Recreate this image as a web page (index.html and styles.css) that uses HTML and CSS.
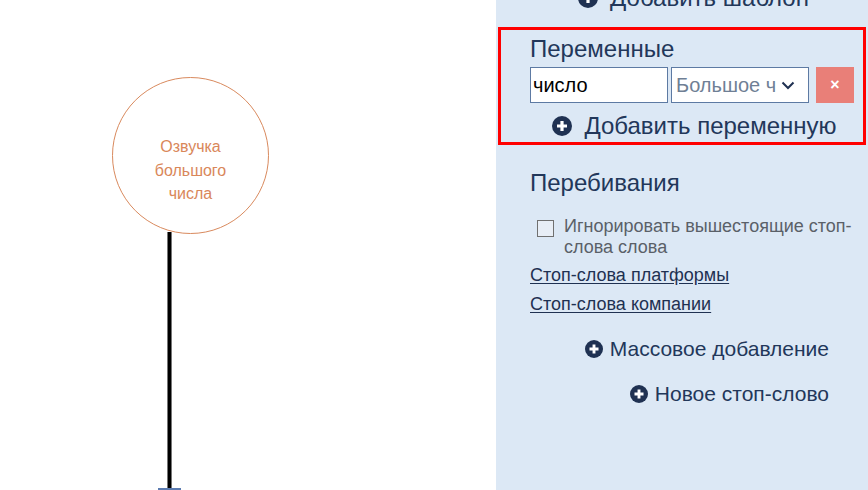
FILE: index.html
```html
<!DOCTYPE html>
<html lang="ru">
<head>
<meta charset="utf-8">
<link rel="stylesheet" href="styles.css">
</head>
<body>
<div class="app">
  <div class="canvas">
    <div class="node"><span>Озвучка большого числа</span></div>
    <div class="edge"></div>
    <div class="edge-end"></div>
  </div>
  <aside class="panel">
    <div class="add-link add-template">
      <svg class="plus" viewBox="0 0 20 20"><circle cx="10" cy="10" r="10"/><path d="M10 5v10M5 10h10"/></svg>
      <span>Добавить шаблон</span>
    </div>
    <section class="vars">
      <h2 class="section-title">Переменные</h2>
      <div class="var-row">
        <div class="field">число</div>
        <div class="field select"><span class="select-text">Большое ч</span>
          <svg class="chev" viewBox="0 0 14 9"><path d="M1.5 1.5l5.5 5.5 5.5-5.5"/></svg>
        </div>
        <button class="del">×</button>
      </div>
      <div class="add-link add-var">
        <svg class="plus" viewBox="0 0 20 20"><circle cx="10" cy="10" r="10"/><path d="M10 5v10M5 10h10"/></svg>
        <span>Добавить переменную</span>
      </div>
    </section>
    <section class="interrupts">
      <h2 class="section-title">Перебивания</h2>
      <label class="check">
        <span class="box"></span>
        <span class="check-text">Игнорировать вышестоящие стоп-слова слова</span>
      </label>
      <a class="link" href="#">Стоп-слова платформы</a>
      <a class="link" href="#">Стоп-слова компании</a>
      <div class="actions">
        <div class="action">
          <svg class="plus small" viewBox="0 0 20 20"><circle cx="10" cy="10" r="10"/><path d="M10 5v10M5 10h10"/></svg>
          <span>Массовое добавление</span>
        </div>
        <div class="action">
          <svg class="plus small" viewBox="0 0 20 20"><circle cx="10" cy="10" r="10"/><path d="M10 5v10M5 10h10"/></svg>
          <span>Новое стоп-слово</span>
        </div>
      </div>
    </section>
  </aside>
</div>
</body>
</html>
```
FILE: styles.css
```css
* { box-sizing: border-box; }
html, body { margin: 0; padding: 0; }
body {
  font-family: "Liberation Sans", Arial, sans-serif;
  background: #ffffff;
  width: 868px;
  height: 490px;
  overflow: hidden;
}
.app {
  display: flex;
  height: 490px;
}
.canvas {
  position: relative;
  width: 496px;
  flex: none;
  background: #ffffff;
}
.node {
  position: absolute;
  left: 112px;
  top: 77px;
  width: 157px;
  height: 157px;
  border: 1px solid #d98a5e;
  border-radius: 50%;
  background: #fff;
  display: flex;
  align-items: center;
  justify-content: center;
  text-align: center;
  color: #d9875a;
  font-size: 16px;
  line-height: 23.5px;
  padding: 30px 36px 0;
  z-index: 1;
}
.edge {
  position: absolute;
  left: 167px;
  top: 232px;
  width: 5px;
  height: 258px;
  background: #000;
  box-shadow: inset 1px 0 0 #777, inset -1px 0 0 #777;
}
.edge-end {
  position: absolute;
  left: 158px;
  top: 488px;
  width: 23px;
  height: 2px;
  background: #5b7bb0;
}
.panel {
  flex: 1;
  background: #dce8f5;
  padding: 0 2px;
  color: #22375a;
  overflow: hidden;
}
.plus {
  width: 20px;
  height: 20px;
  flex: none;
}
.plus.small { width: 18px; height: 18px; }
.plus circle { fill: #1f3152; }
.plus path { stroke: #fff; stroke-width: 3.2; fill: none; }
.add-link {
  display: flex;
  align-items: center;
  justify-content: center;
  gap: 12px;
  font-size: 24px;
  line-height: 27px;
  white-space: nowrap;
}
.add-template {
  margin-top: -16px;
  height: 27px;
  padding: 0 12px 0 35px;
}
.vars {
  margin-top: 16px;
  border: 3px solid #ff0000;
  padding: 5px 9px 3px 29px;
}
.section-title {
  margin: 0;
  font-weight: normal;
  font-size: 24px;
  line-height: 27px;
  color: #22375a;
}
.var-row {
  display: flex;
  align-items: center;
  margin-top: 5px;
}
.field {
  width: 138px;
  height: 36px;
  border: 1px solid #5d7aa3;
  background: #fff;
  font-size: 20px;
  line-height: 34px;
  padding-left: 2px;
  color: #000;
}
.select {
  margin-left: 3px;
  display: flex;
  align-items: center;
  padding-left: 4px;
  padding-right: 13px;
  color: #6f7f95;
}
.select-text { flex: 1; white-space: nowrap; overflow: hidden; }
.chev { width: 14px; height: 9px; flex: none; }
.chev path { stroke: #1f3152; stroke-width: 2; fill: none; }
.del {
  margin-left: 7px;
  width: 38px;
  height: 36px;
  border: none;
  background: #e97f78;
  color: #fff;
  font-family: "Liberation Sans", Arial, sans-serif;
  font-weight: bold;
  font-size: 16px;
  padding: 0;
}
.add-var {
  margin-top: 9px;
  padding-left: 5px;
}
.interrupts {
  padding: 24px 12px 0 32px;
}
.check {
  display: flex;
  align-items: flex-start;
  margin-top: 20px;
  padding-left: 7px;
  font-size: 18px;
  line-height: 21px;
  color: #5a6068;
}
.box {
  width: 17px;
  height: 17px;
  border: 1px solid #707070;
  background: #e8eef6;
  margin-top: 4px;
  margin-right: 10px;
  flex: none;
}
.link {
  display: block;
  width: max-content;
  color: #1f3152;
  font-size: 18px;
  line-height: 21px;
  margin-top: 7px;
  text-decoration: underline;
  text-underline-offset: 2px;
}
.link + .link { margin-top: 8px; }
.actions {
  display: flex;
  flex-direction: column;
  align-items: flex-end;
  padding-right: 25px;
  margin-top: 22px;
  gap: 21px;
}
.action {
  display: flex;
  align-items: center;
  gap: 7px;
  font-size: 21px;
  line-height: 24px;
  white-space: nowrap;
}
```
